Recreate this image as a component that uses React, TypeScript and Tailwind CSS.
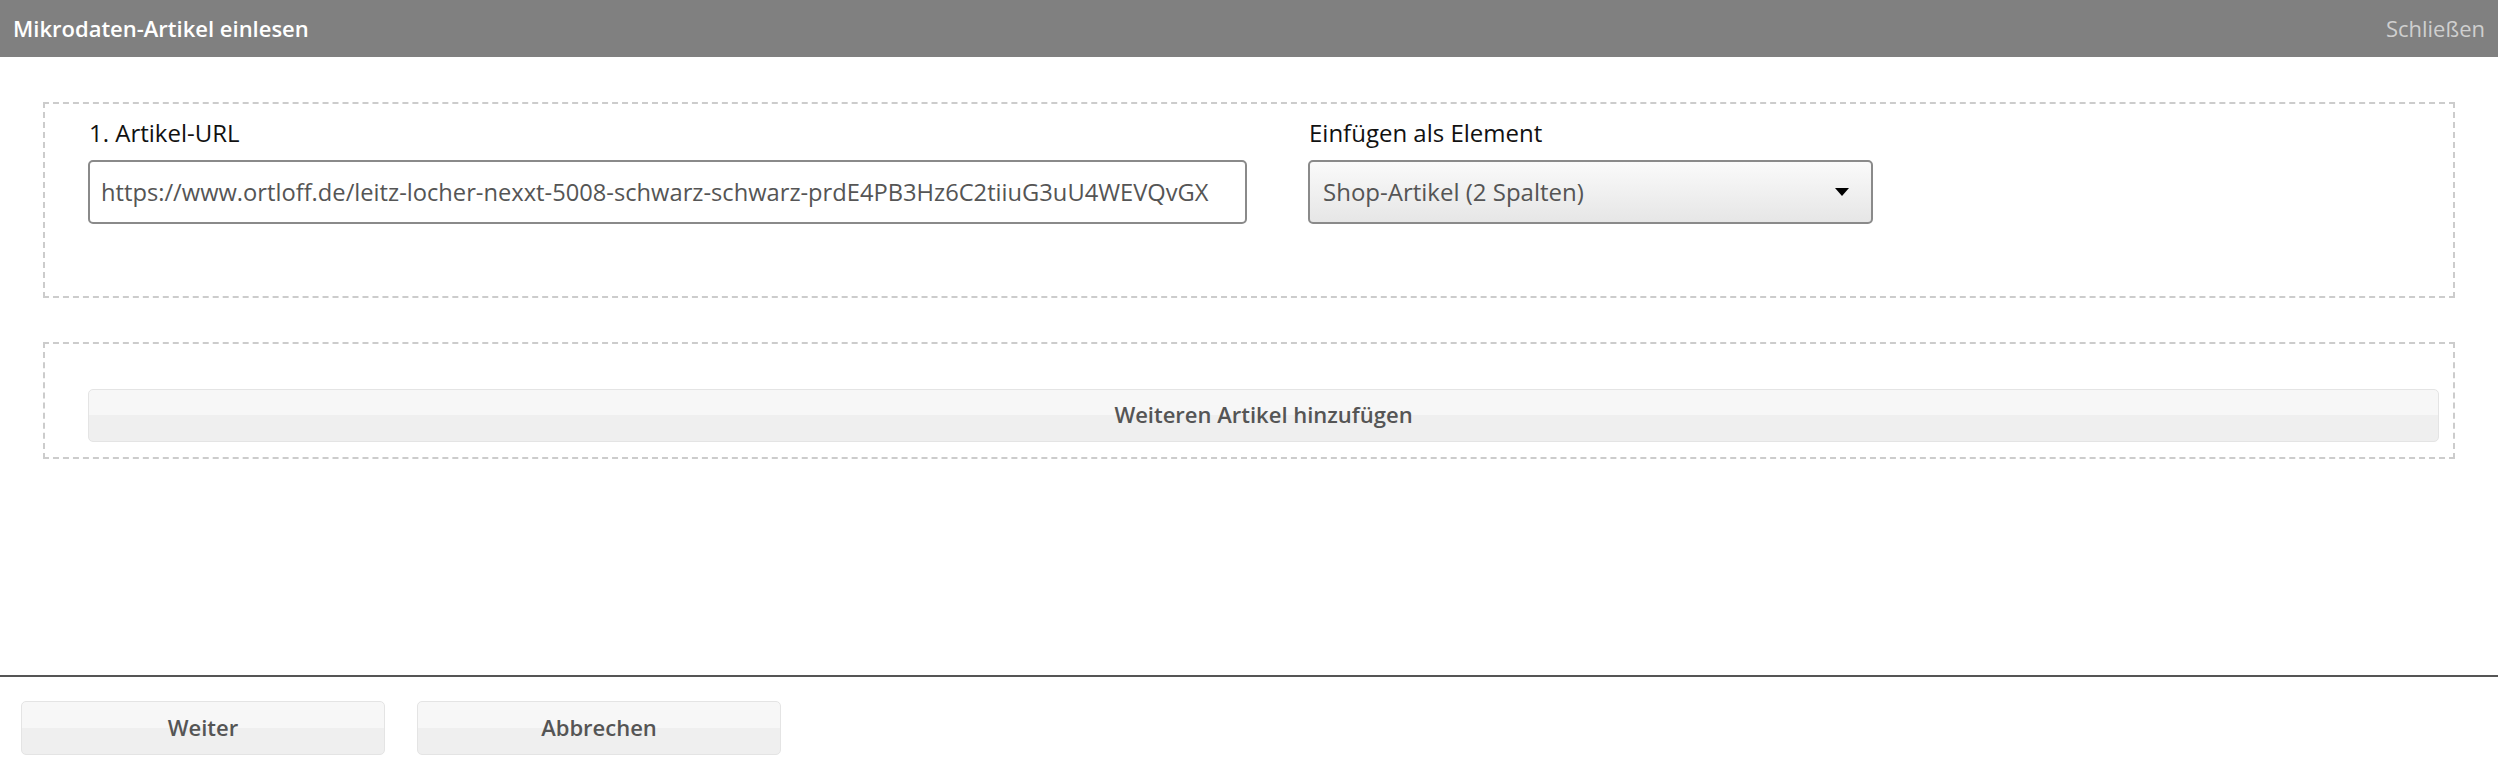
import React from 'react';

const font = { fontFamily: '"Open Sans", "Noto Sans", sans-serif' };

const GrayButton = ({ label, className }: { label: string; className?: string }) => (
    <button
        className={`flex items-center justify-center rounded-[5px] border border-[#e4e4e4] bg-[linear-gradient(to_bottom,#f7f7f7_0%,#f7f7f7_50%,#efefef_50%,#efefef_100%)] pb-[2px] text-[22px] font-semibold text-[#555555] ${className ?? ''}`}
    >
        {label}
    </button>
);

const App = () => {
    return (
        <div className="flex h-[783px] w-full flex-col bg-white" style={font}>
            <header className="flex h-[57px] shrink-0 items-center justify-between bg-[#808080] pl-[13px] pr-[13px]">
                <h1 className="text-[22px] font-semibold text-white">Mikrodaten-Artikel einlesen</h1>
                <span className="text-[22px] text-[#cfcfcf]">Schließen</span>
            </header>

            <main className="flex flex-1 flex-col px-[43px] pt-[45px]">
                <section className="flex h-[196px] gap-[61px] border-2 border-dashed border-[#cccccc] pl-[43px] pt-[13px]">
                    <div className="flex w-[1159px] flex-col">
                        <label className="mb-[11px] pl-[1px] text-[24px] leading-[32px] text-[#111111]">1. Artikel-URL</label>
                        <input
                            readOnly
                            value="https://www.ortloff.de/leitz-locher-nexxt-5008-schwarz-schwarz-prdE4PB3Hz6C2tiiuG3uU4WEVQvGX"
                            className="h-[64px] w-full rounded-[5px] border-2 border-[#8a8a8a] bg-white px-[11px] text-[23.7px] text-[#555555] outline-none"
                        />
                    </div>
                    <div className="flex w-[565px] flex-col">
                        <label className="mb-[11px] pl-[1px] text-[24px] leading-[32px] text-[#111111]">Einfügen als Element</label>
                        <div className="flex h-[64px] items-center justify-between rounded-[5px] border-2 border-[#8a8a8a] bg-[linear-gradient(to_bottom,#fafafa,#e6e6e6)] pl-[13px] pr-[22px]">
                            <span className="text-[24px] text-[#555555]">Shop-Artikel (2 Spalten)</span>
                            <svg width="14" height="8" viewBox="0 0 14 8">
                                <path d="M0 0 L14 0 L7 8 Z" fill="#000000" />
                            </svg>
                        </div>
                    </div>
                </section>

                <section className="mt-[44px] flex h-[117px] border-2 border-dashed border-[#cccccc] pl-[43px] pr-[14px] pt-[45px]">
                    <GrayButton label="Weiteren Artikel hinzufügen" className="h-[53px] w-full" />
                </section>
            </main>

            <footer className="flex h-[108px] shrink-0 gap-[32px] border-t-2 border-[#555555] pl-[21px] pt-[24px]">
                <GrayButton label="Weiter" className="h-[54px] w-[364px]" />
                <GrayButton label="Abbrechen" className="h-[54px] w-[364px]" />
            </footer>
        </div>
    );
};

export default App;
